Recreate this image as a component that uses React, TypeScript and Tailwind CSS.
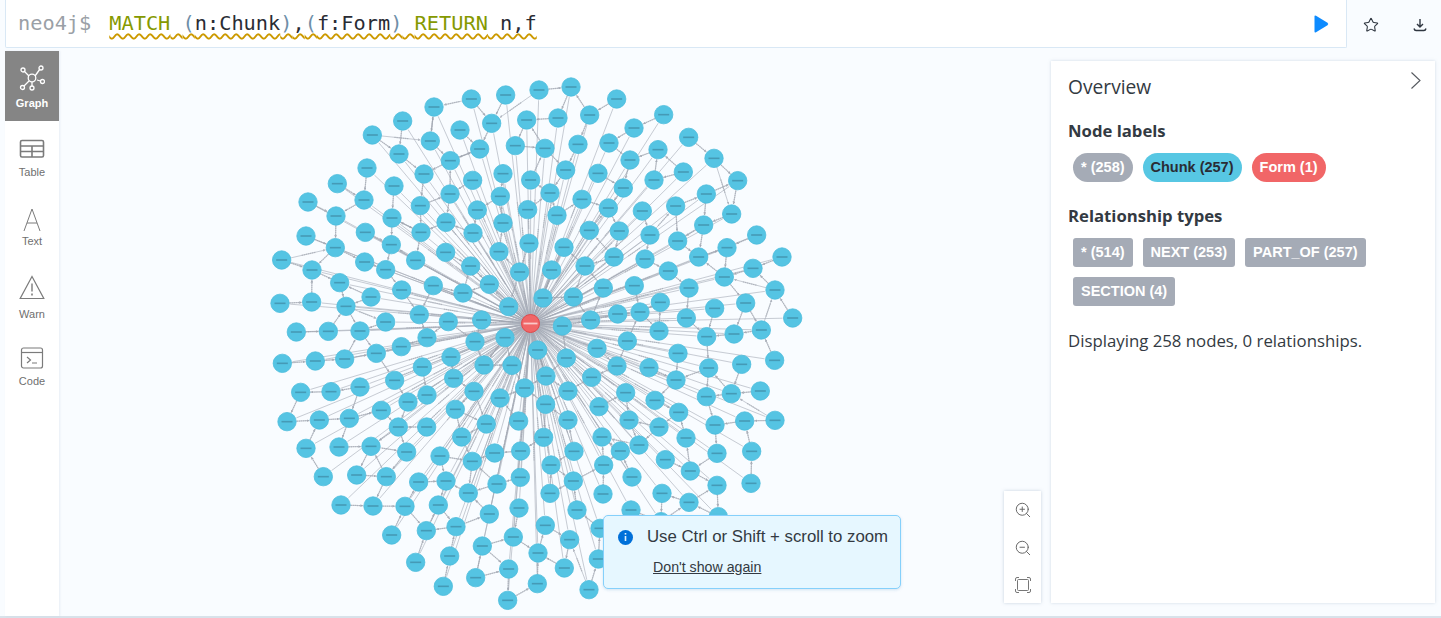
import React from 'react';
import { Star, ZoomIn, ZoomOut } from 'lucide-react';

// node centres read off the screenshot in 4 crops (3x), origin is the crop corner
const crops: { ox: number; oy: number; pts: number[][] }[] = [
  {
    ox: 265,
    oy: 75,
    pts: [
      [619, 72], [722, 60], [507, 96], [413, 138], [322, 180], [585, 165], [680, 145], [785, 135], [496, 198], [644, 222],
      [751, 212], [402, 237], [556, 257], [306, 279], [477, 297], [714, 296], [797, 315], [623, 316], [217, 326], [387, 333],
      [555, 357], [706, 364], [297, 375], [129, 381], [466, 392], [637, 405], [788, 404], [213, 423], [381, 429], [543, 442],
      [714, 444], [301, 472], [468, 472], [624, 474], [123, 483], [792, 505], [211, 518], [379, 509], [542, 532], [702, 530],
      [50, 555], [299, 561], [452, 556], [617, 573], [764, 591], [141, 585], [362, 584], [224, 623], [505, 632], [673, 628],
      [410, 645], [594, 654], [318, 666], [45, 685], [140, 681], [731, 695], [243, 694], [463, 719], [650, 735], [362, 741],
      [550, 740], [94, 771], [190, 769], [285, 768], [720, 788], [486, 788], [630, 800], [409, 815],
    ],
  },
  {
    ox: 535,
    oy: 75,
    pts: [
      [12, 45], [108, 36], [245, 72], [69, 129], [164, 120], [386, 119], [297, 159], [461, 187], [30, 220], [129, 208],
      [222, 204], [369, 224], [537, 250], [285, 255], [92, 285], [189, 295], [445, 291], [608, 317], [357, 315], [265, 339],
      [514, 357], [45, 354], [141, 373], [220, 399], [422, 393], [322, 408], [590, 417], [66, 421], [506, 450], [163, 466],
      [253, 468], [665, 480], [345, 480], [87, 517], [428, 498], [576, 518], [237, 546], [491, 546], [741, 546], [330, 552],
      [150, 573], [50, 585], [654, 580], [400, 588], [568, 606], [298, 632], [205, 639], [462, 639], [720, 645], [115, 666],
      [24, 669], [376, 682], [632, 684], [539, 700], [248, 717], [315, 711], [167, 735], [454, 729], [82, 753], [773, 729],
      [679, 765], [372, 768], [597, 777], [515, 785], [277, 798], [186, 820],
    ],
  },
  {
    ox: 265,
    oy: 345,
    pts: [
      [52, 55], [151, 48], [239, 42], [334, 25], [558, 36], [472, 66], [657, 60], [741, 61], [566, 100], [389, 106],
      [285, 126], [198, 140], [107, 142], [779, 129], [627, 139], [486, 150], [705, 159], [429, 171], [571, 193], [349, 196],
      [66, 230], [163, 225], [253, 220], [761, 228], [664, 237], [485, 246], [400, 246], [590, 276], [123, 310], [222, 306],
      [318, 304], [425, 321], [767, 318], [689, 324], [525, 333], [622, 349], [175, 395], [275, 390], [364, 395], [766, 397],
      [461, 411], [543, 408], [696, 417], [610, 444], [228, 480], [324, 483], [420, 484], [520, 480], [762, 489], [673, 507],
      [573, 545], [484, 557], [380, 570], [745, 576], [652, 603], [554, 633], [452, 652], [731, 672], [632, 698], [535, 724],
      [728, 766],
    ],
  },
  {
    ox: 535,
    oy: 345,
    pts: [
      [8, 15], [94, 39], [429, 25], [719, 46], [620, 58], [521, 69], [342, 68], [246, 63], [170, 97], [33, 93],
      [423, 105], [99, 138], [676, 138], [589, 146], [514, 155], [272, 143], [360, 166], [32, 178], [192, 185], [431, 202],
      [99, 225], [720, 226], [629, 228], [540, 240], [282, 225], [372, 246], [26, 277], [201, 276], [453, 279], [312, 300],
      [650, 319], [546, 325], [256, 318], [117, 319], [391, 344], [48, 360], [206, 360], [466, 378], [291, 396], [648, 415],
      [546, 421], [115, 408], [381, 445], [45, 445], [204, 447], [462, 472], [288, 495], [126, 495], [550, 515], [378, 530],
      [31, 541], [195, 550], [104, 584], [190, 642], [9, 624], [88, 669], [7, 716], [162, 734],
    ],
  },
];

const CENTER = { x: 530.5, y: 323.5 };
const R = 9.2;

type Pt = { x: number; y: number };

const nodes: Pt[] = [];
crops.forEach((c) => {
  c.pts.forEach(([zx, zy]) => {
    const p = { x: c.ox + zx / 3, y: c.oy + zy / 3 };
    const dup = nodes.some((n) => Math.hypot(n.x - p.x, n.y - p.y) < 10);
    if (!dup) nodes.push(p);
  });
});

// NEXT style links: each node to its closest free neighbour
const links: [number, number][] = [];
nodes.forEach((n, i) => {
  const sorted = nodes
    .map((m, j) => ({ j, d: Math.hypot(m.x - n.x, m.y - n.y) }))
    .filter((o) => o.j !== i)
    .sort((a, b) => a.d - b.d);
  const pick = sorted.find((o) => !links.some(([a, b]) => (a === o.j && b === i) || (a === i && b === o.j)));
  if (pick) links.push([i, pick.j]);
  if (i % 4 === 0) links.push([i, sorted[3 + (i % 3)].j]);
});

function Edge({ a, b, arrow }: { a: Pt; b: Pt; arrow?: boolean }) {
  const d = Math.hypot(b.x - a.x, b.y - a.y);
  const ux = (b.x - a.x) / d;
  const uy = (b.y - a.y) / d;
  const mx = (a.x + b.x) / 2;
  const my = (a.y + b.y) / 2;
  const half = Math.min(7, d / 5);
  return (
    <g>
      <line
        x1={a.x}
        y1={a.y}
        x2={b.x - ux * (R + 1)}
        y2={b.y - uy * (R + 1)}
        stroke="#a5abb6"
        strokeWidth={0.7}
        opacity={0.85}
        markerEnd={arrow ? 'url(#arrow)' : undefined}
      />
      {/* caption on the edge is too small to read, it shows as a grey smudge */}
      <line
        x1={mx - ux * half}
        y1={my - uy * half}
        x2={mx + ux * half}
        y2={my + uy * half}
        stroke="#9a9fa9"
        strokeWidth={1.3}
        strokeDasharray="1.4 0.7"
        opacity={0.55}
      />
    </g>
  );
}

function GraphCanvas() {
  return (
    <svg className="absolute left-0 top-0" width={1382} height={567} viewBox="59 51 1382 567">
      <defs>
        <marker id="arrow" markerWidth="4" markerHeight="4" refX="3.5" refY="2" orient="auto">
          <path d="M0 0 L4 2 L0 4 Z" fill="#a5abb6" />
        </marker>
      </defs>
      {nodes.map((n, i) => (
        <Edge key={i} a={CENTER} b={n} />
      ))}
      {links.map(([a, b], i) => (
        <Edge key={i} a={nodes[a]} b={nodes[b]} arrow />
      ))}
      {nodes.map((n, i) => (
        <g key={i}>
          <circle cx={n.x} cy={n.y} r={R} fill="#55c4e3" stroke="#4cbddc" strokeWidth={0.8} />
          <rect x={n.x - 5.5} y={n.y - 0.8} width={11} height={1.6} fill="#3b7f98" opacity={0.6} />
        </g>
      ))}
      <circle cx={CENTER.x} cy={CENTER.y} r={9} fill="#f16667" stroke="#e0484a" strokeWidth={1} />
      <rect x={CENTER.x - 7} y={CENTER.y - 0.9} width={14} height={1.8} fill="#fff" opacity={0.65} />
    </svg>
  );
}

function GraphIcon() {
  return (
    <svg width={26} height={26} viewBox="0 0 26 26" fill="none" stroke="#fff" strokeWidth={1.3}>
      <path d="M5 6 L10 11 M21 4 L16 11 M18 15 L21.5 16 M13 17 L13 21.5 M10 16 L5 21" />
      <circle cx={13} cy={13} r={3.8} />
      <circle cx={4} cy={5} r={2} />
      <circle cx={22} cy={3} r={2} />
      <circle cx={23.5} cy={16.5} r={2} />
      <circle cx={13} cy={23} r={2} />
      <circle cx={3.5} cy={22.5} r={2} />
    </svg>
  );
}

function TableIcon() {
  return (
    <svg width={26} height={20} viewBox="0 0 26 20" fill="none" stroke="#7b7b7b" strokeWidth={1.6}>
      <rect x={1.5} y={1.5} width={23} height={16.5} rx={1.5} />
      <path d="M1.5 7 H24.5 M1.5 12.5 H24.5 M13 7 V18" />
    </svg>
  );
}

function TextIcon() {
  return (
    <svg width={20} height={24} viewBox="0 0 20 24" fill="none" stroke="#7b7b7b" strokeWidth={1}>
      <path d="M2 23 L10 1 L18 23 M5 15 H15" />
    </svg>
  );
}

function WarnIcon() {
  return (
    <svg width={26} height={25} viewBox="0 0 26 25" fill="none" stroke="#7b7b7b" strokeWidth={1.2}>
      <path d="M13 1.5 L24.8 23.5 H1.2 Z" />
      <path d="M13 8.5 V16.5" strokeWidth={1.4} />
      <path d="M13 18.5 V20.5" strokeWidth={1.6} />
    </svg>
  );
}

function CodeIcon() {
  return (
    <svg width={24} height={22} viewBox="0 0 24 22" fill="none" stroke="#7b7b7b" strokeWidth={1.2}>
      <rect x={1.5} y={1} width={21} height={20} rx={2} />
      <path d="M1.5 5.5 H22.5" />
      <path d="M7 10 L10.5 13 L7 16 M12 16 H17" />
    </svg>
  );
}

function FitIcon() {
  return (
    <svg width={16} height={16} viewBox="0 0 16 16" fill="none" stroke="#777" strokeWidth={1}>
      <rect x={2.5} y={2.5} width={11} height={11} rx={1} />
      <path d="M0.5 4 V2 Q0.5 0.5 2 0.5 H4 M12 0.5 H14 Q15.5 0.5 15.5 2 V4 M15.5 12 V14 Q15.5 15.5 14 15.5 H12 M4 15.5 H2 Q0.5 15.5 0.5 14 V12" />
    </svg>
  );
}

const navItems = [
  { label: 'Table', icon: <TableIcon />, box: 'h-[69px] pt-[18px]', gap: 'mt-[7px]' },
  { label: 'Text', icon: <TextIcon />, box: 'h-[69px] pt-[18px]', gap: 'mt-[3px]' },
  { label: 'Warn', icon: <WarnIcon />, box: 'h-[73px] pt-[16px]', gap: 'mt-[8px]' },
  { label: 'Code', icon: <CodeIcon />, box: 'h-[69px] pt-[15px]', gap: 'mt-[6px]' },
];

const nodePills = [
  { text: '* (258)', cls: 'bg-[#a5abb6] text-white' },
  { text: 'Chunk (257)', cls: 'bg-[#57c7e3] text-[#2a2c34]' },
  { text: 'Form (1)', cls: 'bg-[#f16667] text-white' },
];

const relPills = ['* (514)', 'NEXT (253)', 'PART_OF (257)', 'SECTION (4)'];

export default function App() {
  return (
    <div className="h-[618px] w-full overflow-hidden bg-[#f9fcff] flex flex-col font-['Liberation_Sans',sans-serif]">
      {/* editor bar */}
      <div className="flex h-[48px] shrink-0 pl-[5px]">
        <div className="flex-1 flex items-center bg-white border-r border-b border-l border-[#d9e8f5] rounded-b-[2px] pl-[12px] pr-[17px] font-['DejaVu_Sans_Mono',monospace] text-[20.3px] leading-none">
          <span className="text-[#9aa0a6] mr-[18px] -mt-[1px]">neo4j$</span>
          <span className="underline decoration-wavy decoration-[#cc9900] decoration-[1.5px] underline-offset-[3px] text-[#2a2c34] -mt-[1px] whitespace-pre">
            <span className="text-[#859900]">MATCH</span> <span className="text-[#6f8fa8]">(</span>n:Chunk<span className="text-[#6f8fa8]">)</span>,<span className="text-[#6f8fa8]">(</span>f:Form<span className="text-[#6f8fa8]">)</span> <span className="text-[#859900]">RETURN</span> n,f
          </span>
          <svg className="ml-auto mt-[1px]" width={16} height={18} viewBox="0 0 16 18">
            <path d="M1.5 1.5 Q1.5 0 3 0.8 L14.5 7.8 Q16 9 14.5 10.2 L3 17.2 Q1.5 18 1.5 16.5 Z" fill="#0d8bff" />
          </svg>
        </div>
        <div className="w-[94px] flex items-center">
          <Star className="ml-[16px] mt-[1px] text-[#2f3640]" size={16} strokeWidth={1.6} />
          <svg className="ml-[34px] mt-[1px]" width={14} height={14} viewBox="0 0 14 14" fill="none" stroke="#2f3640" strokeWidth={1.4}>
            <path d="M7 1 V8.5 M4 6 L7 9 L10 6" />
            <path d="M1 10.5 Q1.5 12.5 3 12.5 H11 Q12.5 12.5 13 10.5" />
          </svg>
        </div>
      </div>

      <div className="flex flex-1 mt-[3px] pl-[5px] min-h-0">
        {/* left nav */}
        <div className="w-[54px] shrink-0 bg-white flex flex-col text-[11px] text-[#6f6f6f] shadow-[1px_0_2px_rgba(180,195,210,0.25)] z-10">
          <div className="h-[70px] bg-[#858585] flex flex-col items-center pt-[14px] text-white font-bold">
            <GraphIcon />
            <span className="mt-[6px] leading-[13px]">Graph</span>
          </div>
          {navItems.map((item) => (
            <div key={item.label} className={`${item.box} flex flex-col items-center`}>
              {item.icon}
              <span className={`${item.gap} leading-[13px]`}>{item.label}</span>
            </div>
          ))}
        </div>

        {/* graph area */}
        <div className="relative flex-1">
          <GraphCanvas />

          <div className="absolute left-[544px] top-[464px] w-[298px] h-[74px] bg-[#e6f7ff] border border-[#85d0fb] rounded-[5px] shadow-[0_1px_3px_rgba(120,170,210,0.3)] text-[#333a42]">
            <div className="flex items-center pl-[14px] pt-[11px]">
              <span className="w-[15px] h-[15px] rounded-full bg-[#0070d9] flex items-center justify-center">
                <svg width={3} height={8} viewBox="0 0 3 8" fill="#dff1ff">
                  <rect x={0.7} y={0} width={1.6} height={1.6} />
                  <rect x={0.7} y={3} width={1.6} height={5} />
                </svg>
              </span>
              <span className="ml-[14px] text-[16.8px] leading-[20px] whitespace-nowrap">Use Ctrl or Shift + scroll to zoom</span>
            </div>
            <div className="pl-[49px] mt-[10px] text-[14.2px] leading-[20px] underline">Don't show again</div>
          </div>

          <div className="absolute left-[945px] top-[440px] w-[37px] h-[112px] bg-white shadow-[0_0_3px_rgba(150,170,190,0.5)] flex flex-col items-center justify-between py-[10px] text-[#666]">
            <ZoomIn size={18} strokeWidth={1.3} />
            <ZoomOut size={18} strokeWidth={1.3} />
            <FitIcon />
          </div>

          {/* overview panel */}
          <div className="absolute left-[992px] top-[10px] w-[384px] h-[542px] bg-white shadow-[0_0_3px_rgba(150,170,190,0.4)] font-['Open_Sans',sans-serif] text-[#333a42] pl-[18px] pt-[13px]">
            <svg className="absolute right-[13px] top-[10px]" width={12} height={19} viewBox="0 0 12 19" fill="none" stroke="#55595f" strokeWidth={1.1}>
              <path d="M1.5 1.5 L10 9.5 L1.5 17.5" />
            </svg>
            <div className="-ml-[1px] text-[19.2px] leading-[26px]">Overview</div>
            <div className="-ml-[1px] mt-[20px] text-[16.7px] leading-[22px] font-bold">Node labels</div>
            <div className="mt-[11px] flex gap-[10px] pl-[4px] font-['Liberation_Sans',sans-serif] text-[14.5px] font-bold">
              {nodePills.map((p) => (
                <span key={p.text} className={`${p.cls} h-[29px] leading-[29px] px-[8px] rounded-full`}>
                  {p.text}
                </span>
              ))}
            </div>
            <div className="-ml-[1px] mt-[23px] text-[16.7px] leading-[22px] font-bold">Relationship types</div>
            <div className="mt-[11px] flex flex-wrap gap-x-[10px] gap-y-[10px] pl-[4px] w-[320px] font-['Liberation_Sans',sans-serif] text-[14.5px] font-bold text-white">
              {relPills.map((p) => (
                <span key={p} className="bg-[#a5abb6] h-[29px] leading-[29px] px-[8px] rounded-[3px]">
                  {p}
                </span>
              ))}
            </div>
            <div className="-ml-[1px] mt-[23px] text-[16.8px] leading-[24px] whitespace-nowrap">Displaying 258 nodes, 0 relationships.</div>
          </div>
        </div>
      </div>
      <div className="h-[2px] shrink-0 bg-[#d8e2ea]" />
    </div>
  );
}
